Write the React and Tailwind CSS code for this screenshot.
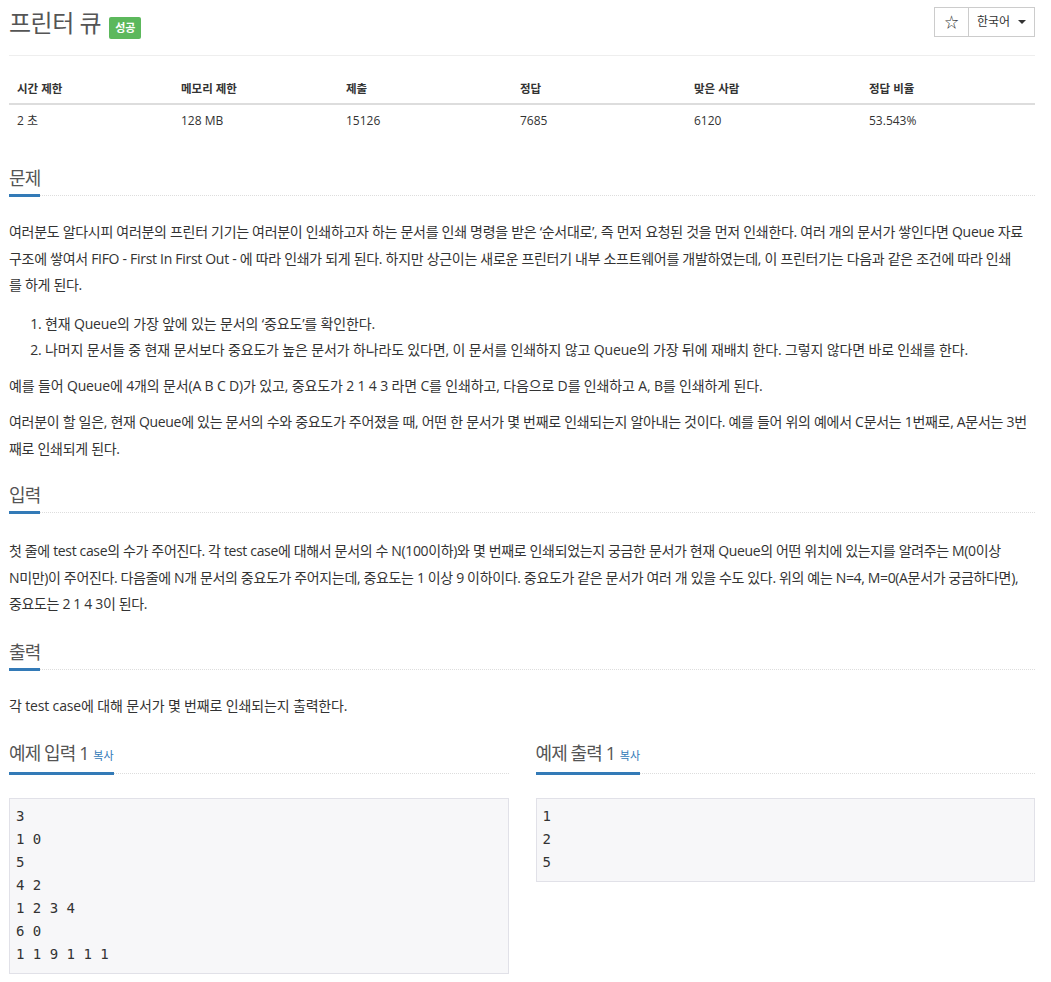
import React from 'react';

const INFO = [
  { label: '시간 제한', value: '2 초', w: 'w-[164px]' },
  { label: '메모리 제한', value: '128 MB', w: 'w-[165px]' },
  { label: '제출', value: '15126', w: 'w-[174px]' },
  { label: '정답', value: '7685', w: 'w-[174px]' },
  { label: '맞은 사람', value: '6120', w: 'w-[175px]' },
  { label: '정답 비율', value: '53.543%', w: 'flex-1' },
];

const SAMPLE_IN = ['3', '1 0', '5', '4 2', '1 2 3 4', '6 0', '1 1 9 1 1 1'];
const SAMPLE_OUT = ['1', '2', '5'];

// line breaks follow the original page's wrapping
const P_INTRO = [
  '여러분도 알다시피 여러분의 프린터 기기는 여러분이 인쇄하고자 하는 문서를 인쇄 명령을 받은 ‘순서대로’, 즉 먼저 요청된 것을 먼저 인쇄한다. 여러 개의 문서가 쌓인다면 Queue 자료',
  '구조에 쌓여서 FIFO - First In First Out - 에 따라 인쇄가 되게 된다. 하지만 상근이는 새로운 프린터기 내부 소프트웨어를 개발하였는데, 이 프린터기는 다음과 같은 조건에 따라 인쇄',
  '를 하게 된다.',
];
const P_TASK = [
  '여러분이 할 일은, 현재 Queue에 있는 문서의 수와 중요도가 주어졌을 때, 어떤 한 문서가 몇 번째로 인쇄되는지 알아내는 것이다. 예를 들어 위의 예에서 C문서는 1번째로, A문서는 3번',
  '째로 인쇄되게 된다.',
];
const P_INPUT = [
  '첫 줄에 test case의 수가 주어진다. 각 test case에 대해서 문서의 수 N(100이하)와 몇 번째로 인쇄되었는지 궁금한 문서가 현재 Queue의 어떤 위치에 있는지를 알려주는 M(0이상',
  'N미만)이 주어진다. 다음줄에 N개 문서의 중요도가 주어지는데, 중요도는 1 이상 9 이하이다. 중요도가 같은 문서가 여러 개 있을 수도 있다. 위의 예는 N=4, M=0(A문서가 궁금하다면),',
  '중요도는 2 1 4 3이 된다.',
];

function Lines({ lines, className = '' }) {
  return (
    <p className={`whitespace-nowrap ${className}`}>
      {lines.map((l, i) => (
        <span key={i} className="block">{l}</span>
      ))}
    </p>
  );
}

function Headline({ children, className = '' }) {
  return (
    <div className={`flex items-end border-b border-dotted border-[#ddd] ${className}`}>
      <h2 className="-mb-[2px] border-b-[3px] border-[#337ab7] pb-[3px] text-[18px] leading-[26px] font-normal text-[#555] tracking-[-0.05em]">
        {children}
      </h2>
    </div>
  );
}

function SampleBox({ lines }) {
  return (
    <pre className="mt-[24px] border border-[#e1e1e8] bg-[#f7f7f9] pl-[6px] pr-[5px] pt-[6px] pb-[7px] font-['DejaVu_Sans_Mono',monospace] text-[14px] leading-[23px] text-[#333]">
      {lines.join('\n')}
    </pre>
  );
}

export default function App() {
  return (
    <div className="min-h-screen bg-white pl-[9px] pr-[16px] font-['Open_Sans','Noto_Sans_CJK_KR',sans-serif] text-[#333]">
      {/* title */}
      <div className="flex items-start justify-between border-b border-[#eee] pt-[7px] pb-[16px]">
        <div className="flex items-start">
          <h1 className="text-[24px] leading-[32px] font-normal text-[#555] tracking-[-0.02em]">프린터 큐</h1>
          <span className="ml-[8px] mt-[10px] flex h-[22px] items-center rounded-[2px] bg-[#5cb85c] px-[6px] text-[11px] font-bold text-white">
            성공
          </span>
        </div>
        <div className="flex h-[30px] border border-[#ccc] text-[#333]">
          <button className="flex w-[34px] items-center justify-center border-r border-[#ccc] text-[14px] leading-none">☆</button>
          <button className="flex w-[65px] items-center justify-between pl-[8px] pr-[8px] text-[12px]">
            한국어
            <span className="h-0 w-0 border-x-[4px] border-t-[4px] border-x-transparent border-t-[#333]" />
          </button>
        </div>
      </div>

      {/* info table */}
      <div className="mt-[15px]">
        <div className="flex border-b-2 border-[#ddd]">
          {INFO.map((c) => (
            <div key={c.label} className={`${c.w} px-[8px] pt-[8px] pb-[4px] text-[11.5px] leading-[20px] font-bold`}>
              {c.label}
            </div>
          ))}
        </div>
        <div className="flex">
          {INFO.map((c) => (
            <div key={c.label} className={`${c.w} px-[8px] pt-[6px] pb-[8px] text-[12px] leading-[20px]`}>
              {c.value}
            </div>
          ))}
        </div>
      </div>

      <div className="text-[14px] leading-[26.5px] tracking-[-0.15px]">
        {/* 문제 */}
        <Headline className="mt-[26px]">문제</Headline>
        <Lines lines={P_INTRO} className="mt-[23px] mb-[12px] tracking-[-0.3px]" />
        <ol className="mb-[9px] list-decimal pl-[36px]">
          <li>현재 Queue의 가장 앞에 있는 문서의 ‘중요도’를 확인한다.</li>
          <li>나머지 문서들 중 현재 문서보다 중요도가 높은 문서가 하나라도 있다면, 이 문서를 인쇄하지 않고 Queue의 가장 뒤에 재배치 한다. 그렇지 않다면 바로 인쇄를 한다.</li>
        </ol>
        <p className="mb-[10px]">예를 들어 Queue에 4개의 문서(A B C D)가 있고, 중요도가 2 1 4 3 라면 C를 인쇄하고, 다음으로 D를 인쇄하고 A, B를 인쇄하게 된다.</p>
        <Lines lines={P_TASK} className="tracking-[-0.3px]" />

        {/* 입력 */}
        <Headline className="mt-[20px]">입력</Headline>
        <Lines lines={P_INPUT} className="mt-[25px] tracking-[-0.35px]" />

        {/* 출력 */}
        <Headline className="mt-[21px]">출력</Headline>
        <p className="mt-[23px]">각 test case에 대해 문서가 몇 번째로 인쇄되는지 출력한다.</p>
      </div>

      {/* samples */}
      <div className="mt-[21px] grid grid-cols-2 gap-x-[27px] pb-[10px]">
        <div>
          <Headline>
            예제 입력 1 <span className="ml-[1px] text-[11px] tracking-normal text-[#337ab7]">복사</span>
          </Headline>
          <SampleBox lines={SAMPLE_IN} />
        </div>
        <div>
          <Headline>
            예제 출력 1 <span className="ml-[1px] text-[11px] tracking-normal text-[#337ab7]">복사</span>
          </Headline>
          <SampleBox lines={SAMPLE_OUT} />
        </div>
      </div>
    </div>
  );
}
